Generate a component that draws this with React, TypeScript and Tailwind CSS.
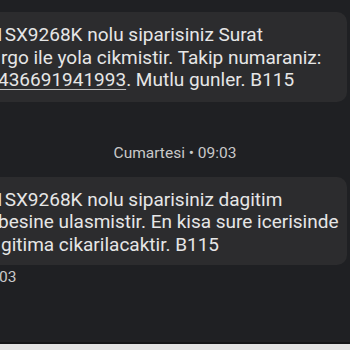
export default function App() {
  return (
    <div
      className="flex h-[350px] w-[350px] flex-col overflow-hidden bg-[#1f2023] text-[#e6e6e6]"
      style={{ fontFamily: "Roboto, 'Noto Sans', sans-serif" }}
    >
      <div className="mt-[12px] w-[347px] overflow-hidden rounded-r-[10px] bg-[#2c2c2e] pt-[12px] pb-[10px] text-[19px] leading-[22.5px]">
        <div className="ml-[-6px] whitespace-nowrap">1SX9268K nolu siparisiniz Surat</div>
        <div className="ml-[1px] whitespace-nowrap">rgo ile yola cikmistir. Takip numaraniz:</div>
        <div className="ml-[-2px] whitespace-nowrap">
          <span className="underline decoration-[#bdbdbd] underline-offset-[3px]">436691941993</span>. Mutlu gunler. B115
        </div>
      </div>

      <div className="mt-[41px] text-center text-[15.5px] leading-[20px] text-[#c9c9c9]">Cumartesi • 09:03</div>

      <div className="mt-[14px] w-[347px] overflow-hidden rounded-r-[10px] bg-[#2c2c2e] pt-[12px] pb-[9px] text-[19px] leading-[22.5px]">
        <div className="ml-[-6px] whitespace-nowrap">1SX9268K nolu siparisiniz dagitim</div>
        <div className="ml-[-2px] whitespace-nowrap">besine ulasmistir. En kisa sure icerisinde</div>
        <div className="ml-[1px] whitespace-nowrap">gitima cikarilacaktir. B115</div>
      </div>

      <div className="mt-[2px] ml-[-1px] text-[15.5px] leading-[20px] text-[#c9c9c9]">03</div>

      <div className="flex-1" />
      <div className="h-[8px] border-t-2 border-[#141517] bg-[#e3e3e3]" />
    </div>
  );
}
